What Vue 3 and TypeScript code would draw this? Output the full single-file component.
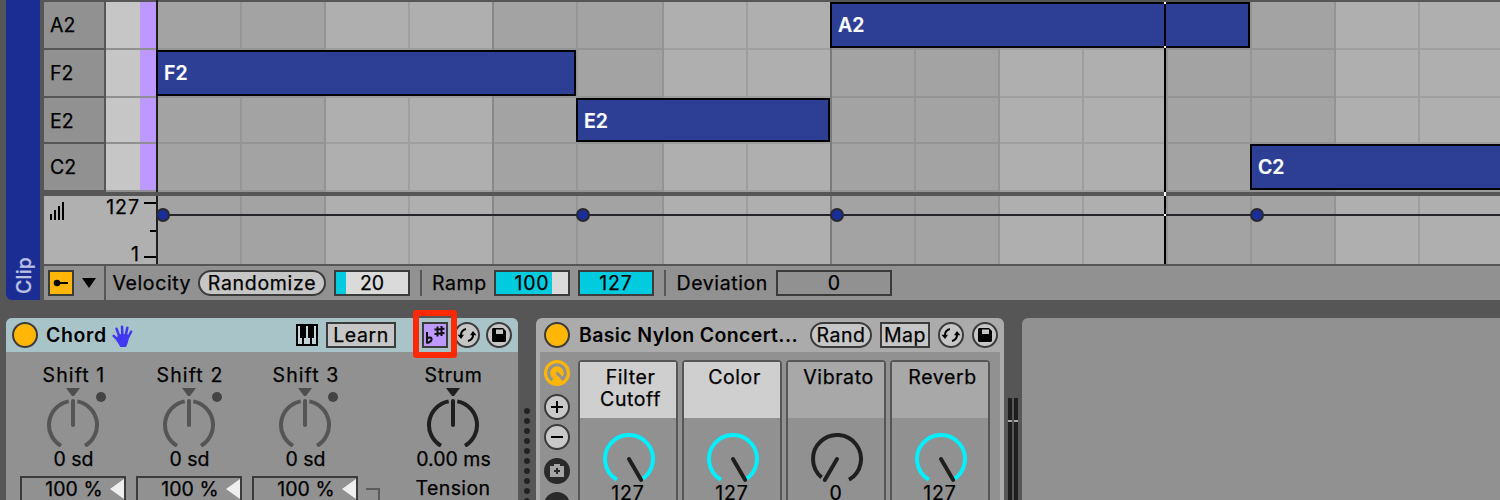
<script setup lang="ts">
interface Note { name: string; x: number; y: number; w: number; h: number }
interface Line { x: number; c: string }
interface Macro { lines: string[]; value: string; lit: boolean; low: boolean }

const rows = ['A2', 'F2', 'E2', 'C2']

const notes: Note[] = [
  { name: 'F2', x: -2, y: 50, w: 420, h: 46 },
  { name: 'E2', x: 418, y: 98, w: 254, h: 44 },
  { name: 'A2', x: 672, y: 2, w: 420, h: 46 },
  { name: 'C2', x: 1092, y: 144, w: 260, h: 46 },
]

const bands = [168, 504, 842, 1176]
const lines: Line[] = [82, 166, 250, 334, 418, 504, 588, 672, 756, 840, 924, 1008, 1092, 1176, 1260].map((x) => ({
  x,
  c: x === 672 ? '#7b7b7b' : x === 334 ? '#888888' : [166, 504, 840, 1008, 1176].includes(x) ? '#939393' : x === 250 || x === 588 || x === 924 || x === 1260 ? '#9f9f9f' : '#959595',
}))
const rowLines = [48, 96, 142, 190]
const velocities = [5, 425, 679, 1099]

const shifts = ['Shift 1', 'Shift 2', 'Shift 3']
const macros: Macro[] = [
  { lines: ['Filter', 'Cutoff'], value: '127', lit: true, low: false },
  { lines: ['Color'], value: '127', lit: true, low: false },
  { lines: ['Vibrato'], value: '0', lit: false, low: true },
  { lines: ['Reverb'], value: '127', lit: false, low: false },
]
const grip = Array.from({ length: 10 }, (_, i) => 5 + i * 10)
</script>

<template>
  <div class="live">
    <section class="clip">
      <div class="clip-tab"><span>Clip</span></div>
      <div class="editor">
        <div class="roll">
          <div class="names">
            <div v-for="r in rows" :key="r" class="name" :class="{ short: r === 'E2' }">{{ r }}</div>
          </div>
          <div class="keys">
            <div v-for="r in rows" :key="r" class="key"><i></i></div>
          </div>
          <div class="canvas">
            <svg class="lanes" width="1342" height="192" shape-rendering="crispEdges">
              <rect width="1342" height="192" fill="#a3a3a3" />
              <rect v-for="b in bands" :key="b" :x="b" y="0" width="168" height="192" fill="#afafaf" />
              <rect v-for="y in rowLines" :key="y" x="0" :y="y" width="1342" height="2" fill="#000" fill-opacity=".09" />
              <rect v-for="l in lines" :key="l.x" :x="l.x" y="0" width="2" height="192" :fill="l.c" />
              <rect width="1342" height="2" fill="#565656" />
            </svg>
            <div
              v-for="n in notes"
              :key="n.name"
              class="note"
              :class="{ short: n.name === 'E2' }"
              :style="{ left: n.x + 'px', top: n.y + 'px', width: n.w + 'px', height: n.h + 'px' }"
            >{{ n.name }}</div>
          </div>
        </div>
        <div class="velocity">
          <div class="scale">
            <svg class="bars" width="14" height="18" shape-rendering="crispEdges">
              <path d="M1 12v6M5 8v10M9 4v14M13 0v18" stroke="#000" stroke-width="2" />
            </svg>
            <div class="range"><span>127</span><span>1</span></div>
            <svg width="12" height="68" shape-rendering="crispEdges">
              <path d="M0 7h12M6 35h6M0 61h12" stroke="#000" stroke-width="2" />
            </svg>
          </div>
          <svg class="vel-lane" width="1344" height="68">
            <g shape-rendering="crispEdges">
              <rect x="2" width="1342" height="68" fill="#a3a3a3" />
              <rect v-for="b in bands" :key="b" :x="b + 2" width="168" height="68" fill="#afafaf" />
              <rect v-for="l in lines" :key="l.x" :x="l.x + 2" width="2" height="68" :fill="l.c" />
              <rect width="2" height="68" fill="#1f1f1f" />
              <rect x="6" y="18" width="1338" height="2" fill="#26262a" />
            </g>
            <circle v-for="v in velocities" :key="v" :cx="v + 2" cy="19" r="6" fill="#1b2d96" stroke="#29292e" stroke-width="2" />
          </svg>
        </div>
        <svg class="playhead" width="2" height="264" shape-rendering="crispEdges">
          <rect y="2" width="2" height="262" fill="#000" />
          <path d="M0 3h2M0 47h2M0 215h2" stroke="#fff" stroke-width="2" />
          <path d="M0 194h2" stroke="#fff" stroke-width="4" />
        </svg>
        <div class="tools">
          <div class="tool-pick">
            <svg width="26" height="26">
              <rect x="1" y="1" width="24" height="24" fill="#ffb607" stroke="#3b3b3b" stroke-width="2" />
              <circle cx="9" cy="13" r="3.3" />
              <path d="M9 13H20" stroke="#000" stroke-width="2" />
            </svg>
            <svg width="14" height="10"><path d="M0 0h14L7 10z" /></svg>
          </div>
          <div class="tool-row">
            <span class="lbl vel">Velocity</span>
            <button class="pill randomize">Randomize</button>
            <div class="slider s20"><b>20</b></div>
            <i class="rule"></i>
            <span class="lbl ramp">Ramp</span>
            <div class="slider s100"><b>100</b></div>
            <div class="slider s127"><b>127</b></div>
            <i class="rule"></i>
            <span class="lbl dev">Deviation</span>
            <div class="slider s0"><b>0</b></div>
          </div>
        </div>
      </div>
    </section>

    <section class="devices">
      <article class="chord">
        <header>
          <i class="power"></i>
          <h2>Chord</h2>
          <svg class="hand" width="21" height="23" viewBox="0 0 21 23">
            <g fill="none" stroke="#4338f2" stroke-linecap="round">
              <path d="M1.700 10.900 7 16" stroke-width="2.600" />
              <path d="M4.500 3.700 7.500 12" stroke-width="2.500" />
              <path d="M10 1.700 10.400 11" stroke-width="2.600" />
              <path d="M15.300 2.800 13.600 11" stroke-width="2.600" />
              <path d="M19.200 6.500 15.500 13.500" stroke-width="2.500" />
            </g>
            <path d="M6 10 9 9l6.500.2L17 12.500 15.800 17.800 14 22H8.200L7 19.500 4 15z" fill="#4338f2" />
          </svg>
          <svg class="piano" width="22" height="22" shape-rendering="crispEdges">
            <rect width="22" height="22" />
            <rect x="2" y="2" width="18" height="18" fill="#c2d3d7" />
            <path d="M4 0H10V14H8V20H6V14H4zM12 0H18V14H16V20H14V14H12z" />
          </svg>
          <button class="box learn">Learn</button>
          <span class="scale-on">
            <svg width="22" height="22" fill="none" stroke="#111" stroke-width="2">
              <path d="M3 8v11.500M3.200 14.600c1.600-1.700 4.600-1.300 4.400.8-.2 1.600-2.200 3-4.400 3.700" />
              <path d="M13.500 2.500v10M17.500 2v10M10.500 5.500l10-.8M10.500 9.900l10-.8" />
            </svg>
          </span>
          <span class="round swap">
            <svg width="22" height="22" viewBox="-11 -11 22 22">
              <path d="M-6 .8A6 6 0 0 1-1-6M6-.8A6 6 0 0 1 1 6" fill="none" stroke="#000" stroke-width="2" />
              <path d="M-9.500-.2h6.500L-6 4zM9.500.2h-6.500L6-4z" />
            </svg>
          </span>
          <span class="round save">
            <svg width="14" height="14"><path fill-rule="evenodd" d="M1 0H11L14 3V13L13 14H1L0 13V1zM4 1.500V6H11V1.500z" /></svg>
          </span>
        </header>
        <div class="chord-body">
          <div v-for="s in shifts" :key="s" class="shift">
            <div class="cap wide">{{ s }}</div>
            <svg width="106" height="60" viewBox="-53 -38 106 60">
              <path d="M-7-37H7L1-29H-1z" fill="#4f4f4f" />
              <circle cx="28" cy="-28" r="5" fill="#444" />
              <g fill="none" stroke="#555" stroke-width="4">
                <path d="M-4.300-23.600A24 24 0 0 0-12 20.800M4.300-23.600A24 24 0 0 1 12 20.800" />
                <path d="M0-24V0" stroke-linecap="round" />
              </g>
            </svg>
            <div class="val">0 sd</div>
            <div class="amount"><span>100 %</span><svg width="14" height="22"><path d="M14 1V21L0 11z" fill="#efefef" /></svg></div>
          </div>
          <svg class="link" width="14" height="14"><path d="M0 1H13V14" fill="none" stroke="#5a5a5a" stroke-width="2" /></svg>
          <div class="strum">
            <div class="cap">Strum</div>
            <svg width="106" height="60" viewBox="-53 -38 106 60">
              <path d="M-7-37H7L1-29H-1z" fill="#1f1f1f" />
              <g fill="none" stroke="#1f1f1f" stroke-width="4">
                <path d="M-4.300-23.600A24 24 0 0 0-12 20.800M4.300-23.600A24 24 0 0 1 12 20.800" />
                <path d="M0-24V0" stroke-linecap="round" />
              </g>
            </svg>
            <div class="val">0.00 ms</div>
            <div class="tension">Tension</div>
          </div>
        </div>
        <div class="highlight"></div>
      </article>

      <svg class="grip" width="18" height="94"><circle v-for="y in grip" :key="y" cx="9" :cy="y" r="3" fill="#222" /></svg>

      <article class="rack">
        <header>
          <i class="power"></i>
          <h2>Basic Nylon Concert...</h2>
          <button class="pill rand">Rand</button>
          <button class="box map">Map</button>
          <span class="round swap">
            <svg width="22" height="22" viewBox="-11 -11 22 22">
              <path d="M-6 .8A6 6 0 0 1-1-6M6-.8A6 6 0 0 1 1 6" fill="none" stroke="#000" stroke-width="2" />
              <path d="M-9.500-.2h6.500L-6 4zM9.500.2h-6.500L6-4z" />
            </svg>
          </span>
          <span class="round save">
            <svg width="14" height="14"><path fill-rule="evenodd" d="M1 0H11L14 3V13L13 14H1L0 13V1zM4 1.500V6H11V1.500z" /></svg>
          </span>
        </header>
        <div class="rack-body">
          <svg class="side" width="26" height="140">
            <circle cx="13" cy="13" r="13" fill="#ffb607" />
            <path d="M8.500 20A8.300 8.300 0 1 1 18.700 19L12.500 12.500" fill="none" stroke="#919191" stroke-width="3" />
            <g fill="#c9c9c9" stroke="#3b3b3b" stroke-width="2">
              <circle cx="13" cy="47" r="12" /><circle cx="13" cy="77" r="12" />
            </g>
            <path d="M7 47H19M13 41V53M7 77H19" stroke="#000" stroke-width="2" />
            <circle cx="13" cy="111" r="13" fill="#2a2a2a" /><circle cx="13" cy="145" r="13" fill="#2a2a2a" />
            <path d="M6 106h4v-2h6v2h4v11H6z" fill="#a5a5a5" />
            <path d="M13 108V114M10 111H16" stroke="#2a2a2a" stroke-width="2" />
          </svg>
          <div v-for="m in macros" :key="m.lines[0]" class="macro">
            <div class="macro-name" :class="{ lit: m.lit }">
              <span v-for="t in m.lines" :key="t">{{ t }}</span>
            </div>
            <svg width="96" height="66" viewBox="-49 -41 96 66" fill="none" stroke-width="4">
              <template v-if="m.low">
                <path d="M-15.400 18.400A24 24 0 1 1 12 20.800" stroke="#1f1f1f" />
                <path d="M0 0L-12.200 21" stroke="#1f1f1f" stroke-linecap="round" />
              </template>
              <template v-else>
                <path d="M-12 20.800A24 24 0 1 1 12 20.800" stroke="#00f0ff" />
                <path d="M0 0L12.200 21" stroke="#1f1f1f" stroke-linecap="round" />
              </template>
            </svg>
            <div class="macro-val">{{ m.value }}</div>
          </div>
        </div>
      </article>

      <svg class="meter" width="18" height="102" shape-rendering="crispEdges">
        <path d="M6 0V102M12 0V102" stroke="#1d1d1d" stroke-width="4" />
        <path d="M4 23H8M10 23H14" stroke="#a9a9a9" stroke-width="2" />
      </svg>
      <div class="drop"></div>
    </section>
  </div>
</template>

<style>
body { margin: 0; background: #565656; overflow: hidden; }
</style>

<style scoped>
* { box-sizing: border-box; }
svg { display: block; flex: none; }
.live { width: 1500px; height: 500px; overflow: hidden; background: #565656; color: #000; font: 400 19.5px/26px Inter, "Liberation Sans", sans-serif; -webkit-text-stroke: .25px currentColor; white-space: nowrap; }
.clip { display: flex; height: 300px; padding-left: 6px; }
.clip-tab { width: 34px; margin-right: 4px; background: #1b2d93; border-radius: 0 0 0 6px; display: flex; align-items: flex-end; padding: 0 0 6px 4px; }
.clip-tab span { writing-mode: vertical-rl; transform: rotate(180deg); color: #bcc3e2; font-size: 19.5px; font-weight: 500; line-height: 28px; letter-spacing: .2px; }
.editor { width: 1456px; position: relative; }
.roll { display: flex; height: 196px; }
.names { width: 60px; margin-right: 2px; padding-top: 2px; display: grid; grid-template-rows: 46px 46px 44px 46px; gap: 2px; align-content: start; }
.name { background: #919191; padding-left: 6px; display: flex; align-items: center; }
.short { padding-top: 2px; }
.keys { width: 50px; height: 190px; margin-top: 2px; background: #909090; display: grid; grid-template-rows: 46px 46px 44px 46px; gap: 2px; }
.key { background: #c6c6c6; display: flex; justify-content: flex-end; }
.key i { width: 16px; background: #bd99ff; }
.canvas { position: relative; width: 1344px; height: 192px; border-left: 2px solid #1f1f1f; }
.note { position: absolute; background: #2d3f94; border: 2px solid #000; color: #fff; font-weight: 600; padding-left: 6px; display: flex; align-items: center; -webkit-text-stroke: .2px currentColor; }
.velocity { display: flex; height: 68px; }
.scale { display: flex; width: 112px; background: #b0b0b0; padding-left: 6px; }
.bars { margin-top: 6px; }
.range { flex: 1; display: flex; flex-direction: column; justify-content: space-between; text-align: right; padding: 0 4px 0 0; height: 68px; margin-top: -2px; letter-spacing: 1px; }
.range span:last-child { margin-bottom: -5px; }
.playhead { position: absolute; left: 1120px; top: 0; }
.tools { display: flex; height: 34px; margin-top: 2px; }
.tool-pick { width: 60px; margin-right: 2px; background: #919191; display: flex; align-items: center; gap: 8px; padding-left: 4px; }
.tool-row { flex: 1; background: #919191; display: flex; align-items: center; }
.lbl { letter-spacing: .6px; flex: none; }
.vel { width: 92px; padding-left: 6.5px; }
.ramp { width: 72px; padding-left: 10px; }
.dev { width: 110px; padding-left: 10.5px; }
button { font: inherit; color: inherit; padding: 0; line-height: 22px; height: 26px; border: 2px solid #3b3b3b; background: #c6c6c6; letter-spacing: .5px; flex: none; -webkit-text-stroke: inherit; }
.pill { border-radius: 13px; }
.randomize { width: 128px; margin-right: 8px; letter-spacing: .7px; }
.slider { width: 76px; height: 26px; border: 2px solid #3b3b3b; text-align: center; line-height: 23px; letter-spacing: .8px; flex: none; }
.slider b { font-weight: 400; }
.s20 { background: linear-gradient(90deg, #00cbdf 10px, #dadada 10px); margin-right: 10px; letter-spacing: 0; }
.s100 { background: linear-gradient(90deg, #00cbdf 56px, #dadada 56px); margin-right: 8px; }
.s127 { background: #00cbdf; margin-right: 10px; }
.s0 { width: 116px; letter-spacing: 0; }
.rule { width: 2px; height: 26px; background: #565656; flex: none; }
.devices { display: flex; height: 200px; padding: 18px 0 0 6px; }
.chord { width: 512px; height: 182px; background: #919191; border-radius: 6px 6px 0 0; position: relative; }
header { height: 34px; display: flex; align-items: center; border-radius: 6px 6px 0 0; }
.chord header { background: #a9c4c9; padding-left: 6px; }
.power { width: 26px; height: 26px; border-radius: 50%; border: 2px solid #3b3b3b; background: #ffb607; flex: none; }
h2 { margin: 0; font-size: 19.5px; font-weight: 600; flex: none; -webkit-text-stroke: 0; }
.chord h2 { width: 66px; margin-left: 8px; letter-spacing: .6px; }
.hand { margin-top: 3px; }
.piano { margin-left: 163px; }
.learn { width: 70px; margin: 0 26px 0 8px; letter-spacing: .6px; }
.scale-on { width: 26px; height: 26px; background: #bd99ff; border: 2px solid #3b3b3b; flex: none; }
.round { width: 26px; height: 26px; border-radius: 50%; border: 2px solid #3b3b3b; background: #c6c6c6; display: flex; align-items: center; justify-content: center; flex: none; }
.chord .swap { margin: 0 6px; }
.highlight { position: absolute; left: 407px; top: -8px; width: 44px; height: 48px; border: 6px solid #ff2a05; border-radius: 3px; }
.chord-body { display: flex; padding: 10px 0 0 14px; height: 148px; overflow: hidden; }
.shift { width: 106px; margin-right: 10px; text-align: center; flex: none; }
.cap { height: 25px; text-align: center; letter-spacing: .6px; padding-left: 1px; }
.wide { letter-spacing: 1.1px; padding-left: 2px; }
.val { height: 29px; margin-top: -1px; text-align: center; padding-left: 1px; }
.amount { height: 40px; margin-top: 1px; border: 2px solid #3b3b3b; display: flex; line-height: 23px; }
.amount span { width: 88px; padding-left: 16px; letter-spacing: .1px; }
.link { margin: 126px 0 0 -2px; }
.strum { width: 106px; margin-left: 20px; text-align: center; flex: none; }
.tension { letter-spacing: .4px; }
.grip { margin-top: 88px; }
.rack { width: 468px; height: 182px; background: #ababab; border-radius: 6px 6px 0 0; }
.rack header { padding-left: 8px; }
.rack h2 { width: 231px; margin: 0 0 0 9px; letter-spacing: .36px; }
.rand { width: 62px; margin: 0 8px 0 0; }
.map { width: 50px; margin-right: 8px; }
.rack .swap { margin-right: 8px; }
.rack-body { margin: 0 4px; height: 148px; padding: 8px 0 0 4px; background: #919191; display: flex; gap: 4px; overflow: hidden; }
.side { margin-right: 4px; }
.macro { width: 100px; height: 150px; border: 2px solid #565656; border-radius: 4px 4px 0 0; flex: none; }
.macro-name { height: 56px; background: #a8a8a8; display: flex; flex-direction: column; align-items: center; line-height: 22px; padding: 4px 0 0 5px; letter-spacing: .6px; }
.macro-name.lit { background: #cfcfcf; }
.macro-val { text-align: center; line-height: 18px; letter-spacing: .8px; }
.meter { margin-top: 80px; }
.drop { width: 478px; background: #919191; border-radius: 6px 0 0 0; }
</style>
